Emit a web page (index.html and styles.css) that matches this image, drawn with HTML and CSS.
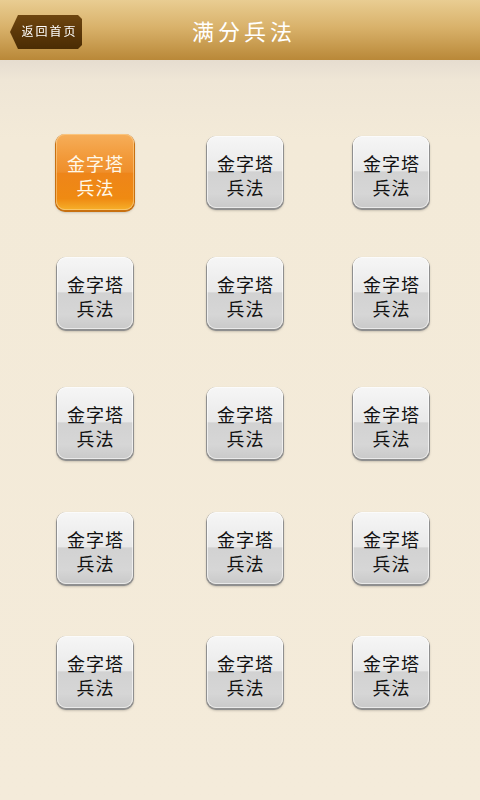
FILE: index.html
```html
<!DOCTYPE html>
<html lang="zh">
<head>
<meta charset="utf-8">
<link rel="stylesheet" href="styles.css">
</head>
<body>
<div class="page">
  <header class="topbar">
    <a class="back"><span class="back-text">返回首页</span></a>
    <h1 class="title">满分兵法</h1>
  </header>
  <main class="grid">
    <div class="cell"><div class="btn btn-active"><span>金字塔</span><span>兵法</span></div></div>
    <div class="cell"><div class="btn"><span>金字塔</span><span>兵法</span></div></div>
    <div class="cell"><div class="btn"><span>金字塔</span><span>兵法</span></div></div>
    <div class="cell"><div class="btn"><span>金字塔</span><span>兵法</span></div></div>
    <div class="cell"><div class="btn"><span>金字塔</span><span>兵法</span></div></div>
    <div class="cell"><div class="btn"><span>金字塔</span><span>兵法</span></div></div>
    <div class="cell"><div class="btn"><span>金字塔</span><span>兵法</span></div></div>
    <div class="cell"><div class="btn"><span>金字塔</span><span>兵法</span></div></div>
    <div class="cell"><div class="btn"><span>金字塔</span><span>兵法</span></div></div>
    <div class="cell"><div class="btn"><span>金字塔</span><span>兵法</span></div></div>
    <div class="cell"><div class="btn"><span>金字塔</span><span>兵法</span></div></div>
    <div class="cell"><div class="btn"><span>金字塔</span><span>兵法</span></div></div>
    <div class="cell"><div class="btn"><span>金字塔</span><span>兵法</span></div></div>
    <div class="cell"><div class="btn"><span>金字塔</span><span>兵法</span></div></div>
    <div class="cell"><div class="btn"><span>金字塔</span><span>兵法</span></div></div>
  </main>
</div>
</body>
</html>
```
FILE: styles.css
```css
html, body {
  margin: 0;
  padding: 0;
}
body {
  width: 480px;
  height: 800px;
  overflow: hidden;
  background: #f3ead8;
  font-family: "Noto Sans CJK SC", "Noto Sans", sans-serif;
}
.page {
  width: 480px;
  height: 800px;
  background: linear-gradient(180deg, #e6ddd0 60px, #efe6d6 80px, #f3ead8 140px, #f4ebda 100%);
}
.topbar {
  height: 60px;
  display: flex;
  align-items: center;
  background: linear-gradient(180deg, #e9cd92 0%, #d9b26b 45%, #b98838 100%);
  position: relative;
}
.back {
  position: absolute;
  left: 10px;
  top: 15px;
  width: 72px;
  height: 34px;
  display: flex;
  align-items: center;
  justify-content: center;
  padding-left: 7px;
  box-sizing: border-box;
  background: linear-gradient(180deg, #6e4610 0%, #5a3608 55%, #4a2c04 100%);
  clip-path: polygon(8px 0, 68px 0, 72px 4px, 72px 30px, 68px 34px, 8px 34px, 0 17px);
  filter: drop-shadow(0 1px 1px rgba(60,30,0,0.5));
}
.back-text {
  color: #fff;
  font-size: 12px;
  letter-spacing: 2px;
  line-height: 1;
  margin-top: -3px;
}
.title {
  margin: 0;
  width: 100%;
  text-align: center;
  color: #fff;
  font-size: 22px;
  font-weight: normal;
  letter-spacing: 4px;
  padding-left: 8px;
  box-sizing: border-box;
}
.grid {
  display: grid;
  grid-template-columns: 150px 150px 142px;
  grid-template-rows: 121px 130px 125px 124px 124px;
  padding: 76px 0 0 20px;
}
.cell {
  display: flex;
  justify-content: center;
  align-items: flex-start;
}
.btn {
  width: 76px;
  height: 72px;
  border-radius: 9px;
  display: flex;
  flex-direction: column;
  align-items: center;
  justify-content: center;
  padding-top: 5px;
  background: linear-gradient(180deg, #f6f6f6 0%, #e9e9e9 48%, #d2d2d2 50%, #d6d6d6 80%, #c9c9c9 100%);
  box-shadow: inset 0 0 0 1px rgba(255,255,255,0.6), 0 1px 0 1px #8f8f8f, 0 2px 3px rgba(0,0,0,0.35);
  color: #111;
  font-size: 18px;
  font-weight: normal;
  line-height: 24px;
  letter-spacing: 1px;
  padding-left: 1px;
  box-sizing: border-box;
}
.btn-active {
  width: 78px;
  height: 76px;
  margin-top: -2px;
  color: #fff8e8;
  background: linear-gradient(180deg, #f6ae5a 0%, #f29a3a 30%, #ef8f2b 50%, #ee8519 52%, #ef8a12 85%, #f6b02a 100%);
  box-shadow: inset 0 0 0 1px rgba(255,220,160,0.5), 0 1px 0 1px #c87010, 0 2px 3px rgba(0,0,0,0.3);
}
```
